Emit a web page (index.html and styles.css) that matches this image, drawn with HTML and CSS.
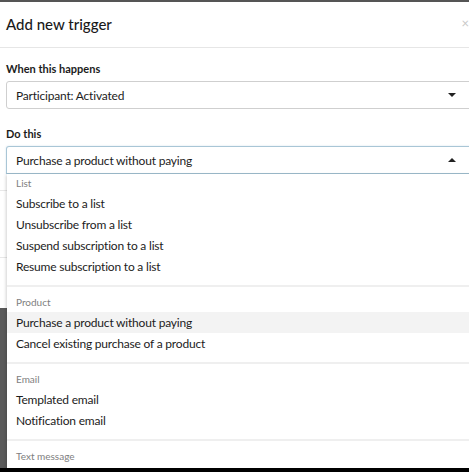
FILE: index.html
```html
<!DOCTYPE html>
<html>
<head>
<meta charset="utf-8">
<link rel="stylesheet" href="styles.css">
</head>
<body>
<div class="screen">
  <div class="topstrip"></div>
  <div class="modal">
    <div class="modal-header">
      <h1 class="title">Add new trigger</h1>
      <span class="close">×</span>
    </div>
    <div class="modal-body">
      <div class="field">
        <label class="label">When this happens</label>
        <div class="select">
          <span>Participant: Activated</span>
          <span class="caret down"></span>
        </div>
      </div>
      <div class="field field-open">
        <label class="label">Do this</label>
        <div class="select select-open">
          <span>Purchase a product without paying</span>
          <span class="caret up"></span>
        </div>
        <div class="menu">
          <div class="group">
            <div class="group-title">List</div>
            <div class="option">Subscribe to a list</div>
            <div class="option">Unsubscribe from a list</div>
            <div class="option">Suspend subscription to a list</div>
            <div class="option">Resume subscription to a list</div>
          </div>
          <div class="group">
            <div class="group-title">Product</div>
            <div class="option active">Purchase a product without paying</div>
            <div class="option">Cancel existing purchase of a product</div>
          </div>
          <div class="group">
            <div class="group-title">Email</div>
            <div class="option">Templated email</div>
            <div class="option">Notification email</div>
          </div>
          <div class="group">
            <div class="group-title">Text message</div>
          </div>
        </div>
      </div>
      <div class="rule rule-a"></div>
      <div class="rule rule-b"></div>
    </div>
  </div>
</div>
</body>
</html>
```

FILE: styles.css
```css
html, body {
  margin: 0;
  padding: 0;
  background: #000;
}
body {
  font-family: Lato, "Open Sans", sans-serif;
  color: #1c1c1c;
  overflow: hidden;
}
.screen {
  height: 468px;
  background: #5a5a5a;
  overflow: hidden;
  display: flex;
  flex-direction: column;
}
.topstrip {
  height: 2px;
  background: #555;
  flex: none;
}
.modal {
  background: #fff;
  width: 480px;
  height: 306px;
  flex: none;
}
.modal-header {
  height: 44px;
  border-bottom: 1px solid #e6e6e6;
  display: flex;
  align-items: center;
  justify-content: space-between;
  padding: 0 0 1px 6px;
}
.title {
  margin: 0;
  font-size: 15px;
  font-weight: 500;
  color: #1a1a1a;
}
.close {
  color: #c8c8c8;
  font-size: 13px;
  margin-right: 11px;
  margin-top: -3px;
}
.modal-body {
  padding: 13px 0 0 6px;
}
.field {
  display: flex;
  flex-direction: column;
}
.field + .field {
  margin-top: 17px;
}
.field-open {
  position: relative;
}
.label {
  font-size: 11px;
  font-weight: 700;
  color: #1c1c1c;
  height: 15px;
  line-height: 15px;
  margin-bottom: 5px;
}
.select {
  height: 26px;
  border: 1px solid #cfcfcf;
  border-radius: 3px;
  display: flex;
  align-items: center;
  justify-content: space-between;
  padding: 0 23px 0 9px;
  font-size: 12px;
  letter-spacing: -0.2px;
  color: #1c1c1c;
}
.select-open {
  border-color: #a9c6d6;
  border-bottom-color: #9dbccc;
  box-shadow: 0 0 2px rgba(120, 170, 200, 0.35);
  border-radius: 3px 3px 0 0;
}
.caret {
  width: 0;
  height: 0;
  border-left: 4px solid transparent;
  border-right: 4px solid transparent;
}
.caret.down {
  border-top: 4px solid #222;
}
.caret.up {
  border-bottom: 4px solid #222;
}
.menu {
  position: absolute;
  top: 100%;
  left: 1px;
  width: 470px;
  height: 300px;
  background: #fff;
  box-shadow: -1px 1px 3px rgba(0, 0, 0, 0.18);
  z-index: 5;
}
.group {
  padding: 8px 0 8px 0;
  border-bottom: 2px solid #efefef;
}
.group:first-child {
  padding-top: 2px;
}
.group-title {
  font-size: 10px;
  color: #808080;
  padding: 0 0 2px 9px;
  height: 15px;
  line-height: 15px;
}
.option {
  font-size: 12px;
  letter-spacing: -0.2px;
  color: #1c1c1c;
  height: 21px;
  line-height: 21px;
  padding-left: 9px;
}
.option.active {
  background: #f3f3f3;
}
.rule {
  height: 0;
  border-top: 1px solid #e8e8e8;
  margin-left: -6px;
}
.rule-a {
  margin-top: 16px;
}
.rule-b {
  margin-top: 66px;
}
```
